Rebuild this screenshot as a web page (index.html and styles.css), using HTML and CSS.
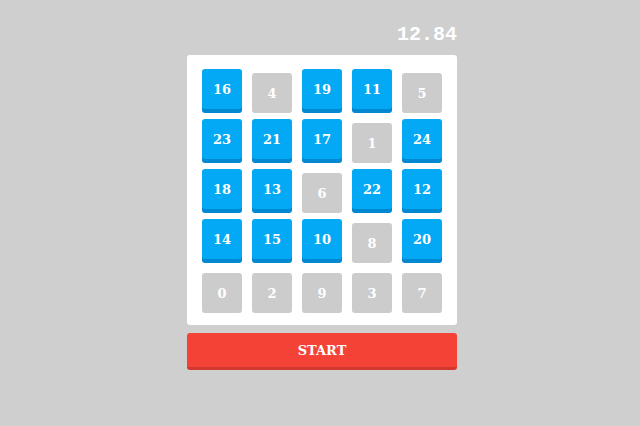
FILE: index.html
```html
<!DOCTYPE html>
<html>
<head>
<meta charset="utf-8">
<link rel="stylesheet" href="styles.css">
</head>
<body>
<div class="game">
  <div class="timer">12.84</div>
  <div class="board">
    <div class="tile on">16</div>
    <div class="tile">4</div>
    <div class="tile on">19</div>
    <div class="tile on">11</div>
    <div class="tile">5</div>
    <div class="tile on">23</div>
    <div class="tile on">21</div>
    <div class="tile on">17</div>
    <div class="tile">1</div>
    <div class="tile on">24</div>
    <div class="tile on">18</div>
    <div class="tile on">13</div>
    <div class="tile">6</div>
    <div class="tile on">22</div>
    <div class="tile on">12</div>
    <div class="tile on">14</div>
    <div class="tile on">15</div>
    <div class="tile on">10</div>
    <div class="tile">8</div>
    <div class="tile on">20</div>
    <div class="tile">0</div>
    <div class="tile">2</div>
    <div class="tile">9</div>
    <div class="tile">3</div>
    <div class="tile">7</div>
  </div>
  <div class="start">START</div>
</div>
</body>
</html>
```
FILE: styles.css
```css
html, body {
  margin: 0;
  padding: 0;
  background: #cfcfcf;
}
.game {
  width: 270px;
  margin-left: 187px;
  padding-top: 24px;
  display: flex;
  flex-direction: column;
}
.timer {
  text-align: right;
  font-family: "Liberation Mono", monospace;
  font-weight: bold;
  font-size: 20px;
  line-height: 22px;
  color: #fff;
  margin-bottom: 9px;
}
.board {
  background: #fff;
  border-radius: 3px;
  padding: 18px 15px 12px;
  display: grid;
  grid-template-columns: repeat(5, 40px);
  grid-auto-rows: 40px;
  gap: 10px;
}
.tile {
  background: #cccccc;
  border-radius: 3px;
  color: #fff;
  font-family: "DejaVu Serif", serif;
  font-weight: bold;
  font-size: 13px;
  display: flex;
  align-items: center;
  justify-content: center;
}
.tile.on {
  background: #03a9f4;
  transform: translateY(-4px);
  box-shadow: 0 4px 0 #0288d1;
}
.start {
  margin-top: 8px;
  height: 34px;
  border-radius: 3px;
  background: #f44336;
  border-bottom: 3px solid #d2392e;
  color: #fff;
  font-family: "DejaVu Serif", serif;
  font-weight: bold;
  font-size: 13px;
  display: flex;
  align-items: center;
  justify-content: center;
}
```
